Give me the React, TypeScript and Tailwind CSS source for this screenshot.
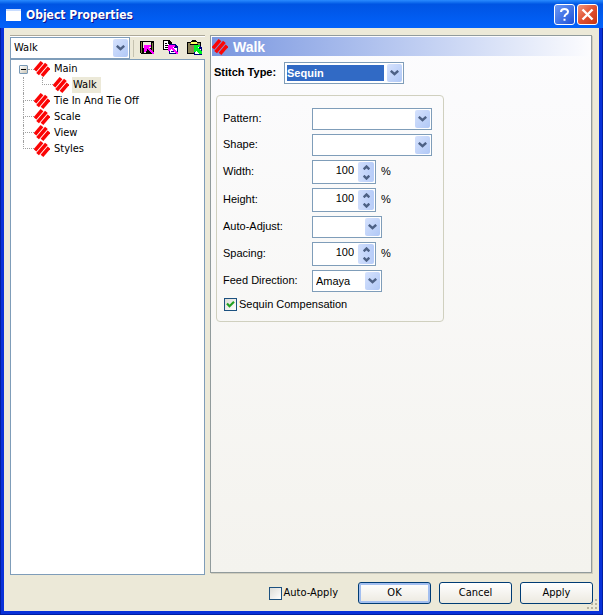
import { useState } from "react";
import clsx from "clsx";

const treeItems = ["Tie In And Tie Off", "Scale", "View", "Styles"];

function Logo() {
    return (
        <svg viewBox="0 0 16 16" className="h-4 w-4 shrink-0" fill="none" stroke="#fb0505" strokeWidth="3.6">
            <path d="M1 9.4 L8 1.2" />
            <path d="M3.6 13.1 L12.4 2.9" />
            <path d="M8 14.8 L15 6.6" />
        </svg>
    );
}

function Chevron({ up, small }: { up?: boolean; small?: boolean }) {
    return (
        <svg
            viewBox="0 0 9 6"
            className={clsx(small ? "h-[5px] w-[7px]" : "h-[6px] w-[9px]", up && "rotate-180")}
            preserveAspectRatio="none"
            fill="none"
            stroke="#4d6185"
            strokeWidth={small ? 3 : 2.4}
        >
            <path d="M0.8 0.8 L4.5 4.2 L8.2 0.8" />
        </svg>
    );
}

interface ComboProps {
    id: string;
    label?: string;
    value?: string;
    className: string;
    highlighted?: boolean;
}

function Combo({ id, label, value = "", className, highlighted }: ComboProps) {
    return (
        <div className={clsx("relative bg-white", className)}>
            <select
                id={id}
                aria-label={label}
                defaultValue={value}
                className={clsx(
                    "block h-full w-full appearance-none border border-[#7f9db9] outline-none",
                    highlighted
                        ? "bg-[#316ac5] bg-clip-content py-[2px] pr-[19px] pl-[2px] font-bold text-white"
                        : "pr-[19px] pl-[3px]"
                )}
            >
                <option value={value}>{value}</option>
            </select>
            <span className="pointer-events-none absolute inset-y-[2px] right-[2px] flex w-[15px] items-center justify-center rounded-[2px] bg-linear-to-br from-[#d6e2fd] to-[#b0c8f6]">
                <Chevron />
            </span>
        </div>
    );
}

function Spinner({ id }: { id: string }) {
    const [value, setValue] = useState(100);

    return (
        <div className="flex items-center gap-[5px]">
            <div className="flex h-6 w-16 border border-[#7f9db9] bg-white p-px">
                <input
                    id={id}
                    type="number"
                    value={value}
                    onChange={(e) => setValue(Number(e.target.value))}
                    className="min-w-0 flex-1 appearance-none pr-1 pb-1 text-right outline-none [-moz-appearance:textfield] [&::-webkit-inner-spin-button]:appearance-none"
                />
                <div className="flex w-4 flex-col">
                    <button
                        type="button"
                        aria-label="Increase"
                        onClick={() => setValue(value + 1)}
                        className="flex flex-1 items-center justify-center rounded-t-[2px] bg-linear-to-r from-[#d0defc] to-[#b7ccf8]"
                    >
                        <Chevron up small />
                    </button>
                    <button
                        type="button"
                        aria-label="Decrease"
                        onClick={() => setValue(value - 1)}
                        className="flex flex-1 items-center justify-center rounded-b-[2px] bg-linear-to-r from-[#d0defc] to-[#b7ccf8]"
                    >
                        <Chevron small />
                    </button>
                </div>
            </div>
            <span className="pb-[2px]">%</span>
        </div>
    );
}

function Field({ id, label, children }: { id: string; label: string; children: React.ReactNode }) {
    return (
        <div className="flex items-center">
            <label htmlFor={id} className="w-[89px] shrink-0 pb-[2px]">{label}</label>
            {children}
        </div>
    );
}

function Branch({ last }: { last?: boolean }) {
    return (
        <span className="flex h-4 w-[11px] shrink-0 flex-col">
            <span className="h-2 border-b border-l border-dotted border-[#a0a0a0]" />
            <span className={clsx("h-2", !last && "border-l border-dotted border-[#a0a0a0]")} />
        </span>
    );
}

function SaveIcon() {
    return (
        <svg viewBox="0 0 15 15" className="h-[15px] w-[15px]" shapeRendering="crispEdges">
            <path fill="#000" d="M0 1h14v13H1l-1-1z" />
            <path fill="#808040" d="M1 2h1v11H1zM12 3h1v10h-1z" />
            <path fill="#ece9d8" d="M3 2h8v6H3zM4 11h2v2H4z" />
            <path fill="#f0f" d="M4 5h7v2H9v1h1v1h1v1h1v1h1v1h1v2h-2v-1h-1v-1h-1v-1H9v-1H8v-1H7v2H6v1H4z" />
        </svg>
    );
}

function CopyIcon() {
    return (
        <svg viewBox="0 0 16 15" className="h-[15px] w-4" shapeRendering="crispEdges">
            <path fill="#000" d="M0 0h6l3 3v7H0z" />
            <path fill="#fff" d="M1 1h4v3h3v5H1z" />
            <path fill="#000" d="M2 3h2v1H2zM2 5h5v1H2zM2 7h4v1H2z" />
            <path fill="#000080" d="M6 4h6l3 3v7H6z" />
            <path fill="#fff" d="M7 5h4v3h3v5H7z" />
            <path fill="#000080" d="M8 11h5v1H8z" />
            <path fill="#f0f" d="M5 5h7v2h-2v1h1v1h1v1h1v1h1v1h1v2h-2v-1h-1v-1h-1v-1h-1v-1H9v-1H8v1H7v1H5z" />
        </svg>
    );
}

function PasteIcon() {
    return (
        <svg viewBox="0 0 16 15" className="h-[15px] w-4" shapeRendering="crispEdges">
            <path fill="#000" d="M0 2h4V1h1V0h4v1h1v1h4v12H0z" />
            <path fill="#8c8458" d="M1 3h12v10H1z" />
            <path fill="#ffff60" d="M4 2h6v2H4z" />
            <path fill="#000" d="M6 1h2v1H6zM3 4h8v1H3z" />
            <path fill="#000080" d="M7 6h6l2 2v7H7z" />
            <path fill="#fff" d="M8 7h4v2h2v5H8z" />
            <path fill="#00f020" d="M7 5h6v2h-2v1h1v1h1v1h1v1h1v3h-3v-1h-1v-1h-1v-1h-1v-1H9v2H7z" />
        </svg>
    );
}

const buttonClass =
    "h-[22px] w-[73px] rounded-[3px] border border-[#003c74] bg-linear-to-b from-white to-[#ece9e0] text-center";

export default function App() {
    return (
        <div className="flex min-h-screen flex-col bg-[#0831d9] font-['DejaVu_Sans_Condensed','Liberation_Sans',sans-serif] text-[11px] leading-4 text-black shadow-[inset_0_0_0_1px_#001ea0]">
            <header className="flex h-7 items-center gap-[5px] bg-linear-to-b from-[#2a8bff] via-[#0054e3] via-15% to-[#0262fb] pt-px pr-[5px] pl-[6px]">
                <span className="h-3 w-[15px] border-t-2 border-[#c8dcff] bg-white" />
                <h1 className="flex-1 text-[12px] font-bold text-white [text-shadow:1px_1px_#0f1089]">Object Properties</h1>
                <div className="flex gap-[2px]">
                    <button type="button" aria-label="Help" className="flex h-[21px] w-[21px] items-center justify-center rounded-[3px] border border-white bg-linear-to-br from-[#6c98f4] to-[#1c4fd8]">
                        <svg viewBox="0 0 13 13" className="h-[13px] w-[13px]" fill="none" stroke="#fff" strokeWidth="2">
                            <path d="M3 4 Q3 1 6.5 1 Q10 1 10 3.8 Q10 5.5 8 6.3 Q6.5 7 6.5 9 M6.5 10.8 V12.8" />
                        </svg>
                    </button>
                    <button type="button" aria-label="Close" className="flex h-[21px] w-[21px] items-center justify-center rounded-[3px] border border-white bg-linear-to-br from-[#f0957a] via-[#e05030] to-[#c83410]">
                        <svg viewBox="0 0 13 13" className="h-[13px] w-[13px]" fill="none" stroke="#fff" strokeWidth="2.4">
                            <path d="M1.5 1.5 L11.5 11.5 M11.5 1.5 L1.5 11.5" />
                        </svg>
                    </button>
                </div>
            </header>

            <main className="relative mx-1 mb-1 flex flex-1 flex-col bg-[#ece9d8] px-[6px] pt-[7px]">
                <div className="flex flex-1 gap-[5px] pr-px">
                    <section className="flex w-[195px] shrink-0 flex-col border-t border-[#aca899]">
                        <div className="flex h-[23px] items-center border-t border-white">
                            <Combo id="stitch" label="Object" value="Walk" className="h-[22px] w-[120px]" />
                            <div className="ml-[3px] flex items-center gap-2 border-l border-[#c5c2b0] pb-[2px] pl-[6px]">
                                <button type="button" aria-label="Save"><SaveIcon /></button>
                                <button type="button" aria-label="Copy"><CopyIcon /></button>
                                <button type="button" aria-label="Paste"><PasteIcon /></button>
                            </div>
                        </div>
                        <ul className="flex-1 border border-[#7f9db9] bg-white pt-px pl-2">
                            <li>
                                <div className="flex items-center">
                                    <button type="button" aria-label="Collapse" className="flex h-[9px] w-[9px] items-center justify-center rounded-[1px] border border-[#7898b5] bg-linear-to-br from-white to-[#c9c4b5]">
                                        <span className="h-px w-[5px] bg-black" />
                                    </button>
                                    <span className="w-[6px] border-t border-dotted border-[#a0a0a0]" />
                                    <Logo />
                                    <span className="pl-1">Main</span>
                                </div>
                                <ul className="ml-1 border-l border-dotted border-[#a0a0a0] pl-[18px]">
                                    <li className="flex items-center">
                                        <Branch last />
                                        <Logo />
                                        <span className="ml-[3px] bg-[#ece9d8] pr-1 pl-px">Walk</span>
                                    </li>
                                </ul>
                            </li>
                            {treeItems.map((item, i) => (
                                <li key={item} className="ml-1 flex items-center">
                                    <Branch last={i === treeItems.length - 1} />
                                    <Logo />
                                    <span className="pl-1">{item}</span>
                                </li>
                            ))}
                        </ul>
                    </section>

                    <section className="mb-[2px] flex-1 border border-[#919b9c] bg-linear-to-b from-[#fcfcfe] to-[#f4f3ee] p-px font-['Liberation_Sans',sans-serif] shadow-[1px_1px_#d0cdbe]">
                        <h2 className="flex h-[19px] items-center gap-[5px] bg-linear-to-r from-[#7a96df] to-[#fcfcfe] text-[14px] font-bold text-white">
                            <Logo />
                            Walk
                        </h2>
                        <div className="mt-[6px] flex items-center pl-[2px]">
                            <label htmlFor="type" className="w-[70px] pb-[2px] font-bold">Stitch Type:</label>
                            <Combo id="type" value="Sequin" highlighted className="h-[22px] w-[120px]" />
                        </div>
                        <div className="mt-[11px] ml-1 flex w-[228px] flex-col gap-1 rounded-[4px] border border-[#d0d0bf] px-[6px] pt-3 pb-[9px]">
                            <Field id="pattern" label="Pattern:">
                                <Combo id="pattern" className="h-[22px] w-[120px]" />
                            </Field>
                            <Field id="shape" label="Shape:">
                                <Combo id="shape" className="h-[22px] w-[120px]" />
                            </Field>
                            <Field id="width" label="Width:">
                                <Spinner id="width" />
                            </Field>
                            <Field id="height" label="Height:">
                                <Spinner id="height" />
                            </Field>
                            <Field id="adjust" label="Auto-Adjust:">
                                <Combo id="adjust" className="h-[22px] w-[70px]" />
                            </Field>
                            <Field id="spacing" label="Spacing:">
                                <Spinner id="spacing" />
                            </Field>
                            <Field id="feed" label="Feed Direction:">
                                <Combo id="feed" value="Amaya" className="h-[22px] w-[70px]" />
                            </Field>
                            <label className="flex items-center gap-[2px] pl-px">
                                <span className="relative flex h-[13px] w-[13px]">
                                    <input type="checkbox" defaultChecked className="peer h-[13px] w-[13px] appearance-none border border-[#1c5180] bg-linear-to-br from-[#dcdcd7] to-white" />
                                    <svg viewBox="0 0 13 13" className="pointer-events-none absolute inset-0 hidden peer-checked:block" fill="none" stroke="#21a121" strokeWidth="2.2">
                                        <path d="M3 5.5 L5.5 8.2 L10 3.8" />
                                    </svg>
                                </span>
                                Sequin Compensation
                            </label>
                        </div>
                    </section>
                </div>

                <footer className="flex h-9 items-center justify-end gap-2">
                    <label className="mr-3 flex items-center gap-[2px]">
                        <input type="checkbox" className="h-[13px] w-[13px] appearance-none border border-[#1c5180] bg-linear-to-br from-[#dcdcd7] to-white" />
                        Auto-Apply
                    </label>
                    <button type="button" className={clsx(buttonClass, "shadow-[inset_0_0_0_2px_#a3bff0]")}>OK</button>
                    <button type="button" className={buttonClass}>Cancel</button>
                    <button type="button" className={buttonClass}>Apply</button>
                </footer>

                <svg viewBox="0 0 12 12" className="absolute right-px bottom-px h-3 w-3" fill="#b8b4a3">
                    <path d="M9 1h2v2H9zM5 5h2v2H5zM9 5h2v2H9zM1 9h2v2H1zM5 9h2v2H5zM9 9h2v2H9z" />
                </svg>
            </main>
        </div>
    );
}
